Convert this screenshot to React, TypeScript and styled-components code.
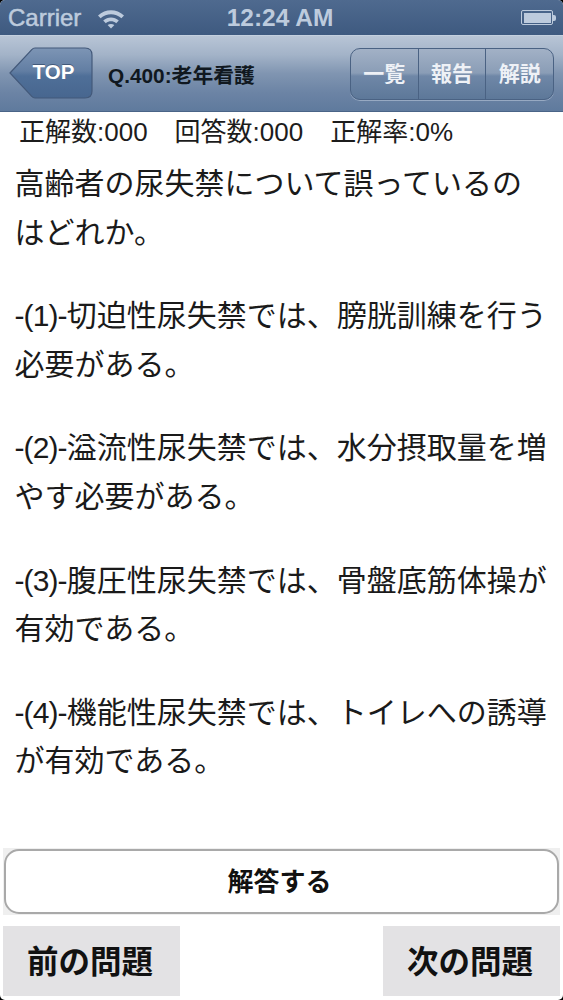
import styled, { createGlobalStyle } from "styled-components";

const GlobalStyle = createGlobalStyle`
  html, body {
    margin: 0;
    padding: 0;
    background: #000;
  }
  body {
    font-family: "Liberation Sans", "Noto Sans CJK JP", sans-serif;
  }
`;

const Screen = styled.div`
  width: 563px;
  height: 1000px;
  background: #fff;
  border-radius: 5px;
  overflow: hidden;
  display: flex;
  flex-direction: column;
`;

const StatusBar = styled.div`
  height: 35px;
  flex-shrink: 0;
  display: grid;
  grid-template-columns: 1fr auto 1fr;
  align-items: center;
  padding: 0 7px 0 8px;
  box-sizing: border-box;
  background: linear-gradient(#4f6a8f, #3e5a80);
  color: #bdcbdd;
  font-weight: 700;
`;

const Carrier = styled.div`
  display: flex;
  align-items: center;
  gap: 15px;
  font-size: 24px;
  font-weight: 400;
  -webkit-text-stroke: 0.5px #bdcbdd;
`;

const Clock = styled.div`
  padding-right: 4px;
  font-size: 24.5px;
`;

const Battery = styled.div`
  justify-self: end;
  display: flex;
  align-items: center;
`;

const BatteryBody = styled.div`
  width: 32px;
  height: 15px;
  box-sizing: border-box;
  border: 1.5px solid #bdcbdd;
  padding: 1.5px;
  border-radius: 2px;
  &::after {
    content: "";
    display: block;
    height: 100%;
    background: #bdcbdd;
  }
`;

const BatteryTip = styled.div`
  width: 3px;
  height: 6px;
  background: #bdcbdd;
  border-radius: 0 2px 2px 0;
`;

const NavBar = styled.div`
  height: 77px;
  flex-shrink: 0;
  display: flex;
  align-items: center;
  padding: 0 9px;
  box-sizing: border-box;
  background: linear-gradient(#b8c5d6 0%, #a3b3c8 25%, #8095b1 50%, #6c84a5 75%, #5f7a9d 100%);
  border-top: 1px solid #c4d0df;
  border-bottom: 1px solid #4a6487;
`;

const BackButton = styled.div`
  position: relative;
  width: 84px;
  height: 52px;
  display: flex;
  align-items: center;
  justify-content: center;
  padding-left: 5px;
  box-sizing: border-box;
  color: #fff;
  font-size: 20.5px;
  font-weight: 700;
  margin-bottom: 1px;
`;

const BackShape = styled.svg`
  position: absolute;
  inset: 0;
`;

const BackLabel = styled.span`
  position: relative;
  margin-top: -2px;
  text-shadow: 0 -1px 0 rgba(40, 60, 90, 0.6);
`;

const NavTitle = styled.div`
  margin-left: 15px;
  flex: 1;
  font-size: 20.8px;
  font-weight: 700;
  color: #101820;
  white-space: nowrap;
`;

const Segments = styled.div`
  display: flex;
  width: 204px;
  height: 52px;
  box-sizing: border-box;
  border: 1px solid #4a6283;
  border-radius: 10px;
  overflow: hidden;
  background: linear-gradient(#a2b1c6 0%, #8a9db6 48%, #6f87a7 54%, #5d7899 100%);
  box-shadow: 0 1px 0 rgba(200, 212, 228, 0.5);
`;

const Segment = styled.div`
  flex: 1;
  display: flex;
  align-items: center;
  justify-content: center;
  padding-bottom: 4px;
  color: #eef1f6;
  font-size: 21px;
  font-weight: 700;
  & + & {
    border-left: 1px solid #4a6283;
  }
`;

const Stats = styled.div`
  display: flex;
  gap: 27px;
  padding: 2px 0 0 19px;
  height: 37px;
  box-sizing: border-box;
  font-size: 26px;
  line-height: 36px;
  color: #1c1c1c;
  flex-shrink: 0;
`;

const Question = styled.div`
  flex: 1;
  padding: 11px 0 0 14.5px;
  font-size: 30px;
  line-height: 48.5px;
  color: #1a1a1a;
  white-space: nowrap;
`;

const Paragraph = styled.p`
  margin: 0 0 35.2px;
`;

const ChoiceMark = styled.span`
  letter-spacing: -0.9px;
`;

const AnswerBand = styled.div`
  margin: 0 3px;
  height: 67px;
  padding: 1px;
  box-sizing: border-box;
  background: #efefef;
  flex-shrink: 0;
`;

const AnswerButton = styled.div`
  height: 100%;
  box-sizing: border-box;
  display: flex;
  align-items: center;
  justify-content: center;
  padding: 0 4px 5px 0;
  background: #fff;
  border: 2px solid #a9a9a9;
  border-radius: 15px;
  font-size: 26px;
  font-weight: 700;
  color: #111;
`;

const PagerRow = styled.div`
  display: flex;
  justify-content: space-between;
  margin: 11px 3px 4px;
  flex-shrink: 0;
`;

const PagerButton = styled.div`
  width: 177px;
  height: 70px;
  display: flex;
  align-items: center;
  justify-content: center;
  padding: 0 3px 5px 0;
  box-sizing: border-box;
  background: #e3e2e4;
  font-size: 31.5px;
  font-weight: 700;
  color: #111;
`;

function WifiIcon() {
  return (
    <svg width="30" height="22" viewBox="0 0 30 22" fill="none">
      <path d="M2 8.5C9.5 1.5 20.5 1.5 28 8.5L25.4 11.2C19.4 6 10.6 6 4.6 11.2Z" fill="#bdcbdd" />
      <path d="M7.2 13.6C11.8 9.6 18.2 9.6 22.8 13.6L20.2 16.2C17 13.6 13 13.6 9.8 16.2Z" fill="#bdcbdd" />
      <path d="M15 21.5L11.6 18C13.6 16.5 16.4 16.5 18.4 18Z" fill="#bdcbdd" />
    </svg>
  );
}

function BackArrow() {
  return (
    <BackShape width="84" height="52" viewBox="0 0 84 52">
      <defs>
        <linearGradient id="backFill" x1="0" y1="0" x2="0" y2="1">
          <stop offset="0" stopColor="#7d95b5" />
          <stop offset="0.46" stopColor="#627ea3" />
          <stop offset="0.56" stopColor="#4f6f98" />
          <stop offset="1" stopColor="#47668f" />
        </linearGradient>
      </defs>
      <path
        d="M1 26L23 2.5Q24 1 26 1H76Q83 1 83 8V44Q83 51 76 51H26Q24 51 23 49.5Z"
        fill="url(#backFill)"
        stroke="#43597a"
        strokeWidth="1.2"
      />
    </BackShape>
  );
}

export default function App() {
  return (
    <>
      <GlobalStyle />
      <Screen>
        <StatusBar>
          <Carrier>
            Carrier
            <WifiIcon />
          </Carrier>
          <Clock>12:24 AM</Clock>
          <Battery>
            <BatteryBody />
            <BatteryTip />
          </Battery>
        </StatusBar>
        <NavBar>
          <BackButton>
            <BackArrow />
            <BackLabel>TOP</BackLabel>
          </BackButton>
          <NavTitle>Q.400:老年看護</NavTitle>
          <Segments>
            <Segment>一覧</Segment>
            <Segment>報告</Segment>
            <Segment>解説</Segment>
          </Segments>
        </NavBar>
        <Stats>
          <span>正解数:000</span>
          <span>回答数:000</span>
          <span>正解率:0%</span>
        </Stats>
        <Question>
          <Paragraph>
            高齢者の尿失禁について誤っているの
            <br />
            はどれか。
          </Paragraph>
          <Paragraph>
            <ChoiceMark>-(1)-</ChoiceMark>切迫性尿失禁では、膀胱訓練を行う
            <br />
            必要がある。
          </Paragraph>
          <Paragraph>
            <ChoiceMark>-(2)-</ChoiceMark>溢流性尿失禁では、水分摂取量を増
            <br />
            やす必要がある。
          </Paragraph>
          <Paragraph>
            <ChoiceMark>-(3)-</ChoiceMark>腹圧性尿失禁では、骨盤底筋体操が
            <br />
            有効である。
          </Paragraph>
          <Paragraph>
            <ChoiceMark>-(4)-</ChoiceMark>機能性尿失禁では、トイレへの誘導
            <br />
            が有効である。
          </Paragraph>
        </Question>
        <AnswerBand>
          <AnswerButton>解答する</AnswerButton>
        </AnswerBand>
        <PagerRow>
          <PagerButton>前の問題</PagerButton>
          <PagerButton>次の問題</PagerButton>
        </PagerRow>
      </Screen>
    </>
  );
}
